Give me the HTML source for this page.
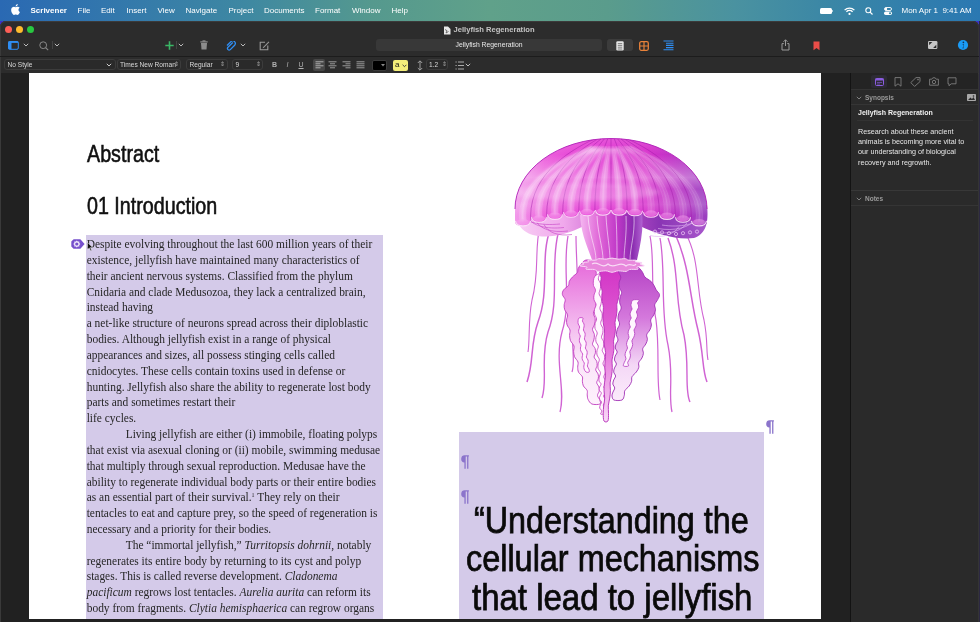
<!DOCTYPE html>
<html><head><meta charset="utf-8">
<style>
*{margin:0;padding:0;box-sizing:border-box}
html,body{width:980px;height:622px;overflow:hidden;background:linear-gradient(90deg,#3b33c9 0,#3b33c9 979px,#2c2842 979px);font-family:"Liberation Sans",sans-serif}
.abs{position:absolute}
#menubar{left:0;top:0;width:980px;height:21px;background:linear-gradient(90deg,#2a69b3 0%,#3378ac 12%,#3e88a2 25%,#55998e 38%,#60a18a 50%,#5a9c8c 62%,#4a92a0 75%,#3a86a6 85%,#2a78b2 100%)}
.mi{position:absolute;top:5px;font-size:8px;color:#fff;line-height:11px;white-space:nowrap}
#win{left:0;top:21px;width:979px;height:601px;background:#2c2c2c;border-radius:6px 6px 0 0;overflow:hidden;box-shadow:inset 1px 0 #3a3a3a,inset -1px 0 #343434,inset 0 1px #3c3a3a}
.tl{position:absolute;top:4.9px;width:7px;height:7px;border-radius:50%}
.ico{position:absolute}
.fb{position:absolute;top:38px;height:11px;border:1px solid #3c3c3c;border-radius:3px;background:#2a2a2a}
.fbt{position:absolute;top:.4px;font-size:6.6px;color:#d8d8d8;line-height:9px;white-space:nowrap}
#doc{left:0;top:73px;width:850px;height:549px;background:#212121;box-shadow:inset 1px 0 #3a3a3a}
#page{left:29px;top:73px;width:792px;height:546px;background:#fff;overflow:hidden}
.body{position:absolute;font-family:"Liberation Serif",serif;font-size:11.45px;line-height:15.83px;color:#262626;white-space:nowrap}
.h{position:absolute;font-size:24px;color:#111;-webkit-text-stroke:.6px #111;white-space:nowrap;transform-origin:0 0;transform:scaleX(.82);line-height:28px}
.q{position:absolute;font-size:36px;color:#0a0a0a;-webkit-text-stroke:.75px #0a0a0a;white-space:nowrap;transform-origin:0 0;line-height:38px}
.pil{position:absolute;font-size:14px;font-weight:bold;color:#8f7cc4;font-family:"Liberation Sans",sans-serif;line-height:14px}
#insp{left:851px;top:73px;width:127px;height:549px;background:#2a2a2a;overflow:hidden}
.it{position:absolute;font-size:7.2px;color:#e6e6e6;line-height:10.2px;white-space:nowrap}
</style></head><body style="will-change:transform">
<div id="menubar" class="abs">
  <svg class="abs" style="left:11px;top:4px" width="9" height="11" viewBox="0 0 17 20"><path fill="#fff" d="M14.1 10.6c0-2.6 2.1-3.8 2.2-3.9-1.2-1.8-3.1-2-3.7-2-1.6-.2-3.1.9-3.9.9-.8 0-2-.9-3.3-.9C3.7 4.8 2.1 5.8 1.2 7.3c-1.8 3.1-.5 7.8 1.3 10.300.9 1.300 1.900 2.700 3.200 2.600 1.300-.1 1.800-.8 3.300-.8s2 .8 3.300.8c1.400 0 2.300-1.300 3.100-2.600 1-1.400 1.400-2.800 1.400-2.900-.1 0-2.700-1-2.700-4.100zM11.600 3c.7-.9 1.200-2.100 1.100-3.300-1 0-2.300.7-3 1.600-.7.800-1.300 2-1.100 3.200 1.100.1 2.300-.6 3-1.500z"/></svg>
  <div class="mi" style="left:30.5px;font-weight:bold">Scrivener</div>
  <div class="mi" style="left:77.5px">File</div>
  <div class="mi" style="left:101px">Edit</div>
  <div class="mi" style="left:126.5px">Insert</div>
  <div class="mi" style="left:157.5px">View</div>
  <div class="mi" style="left:185.5px">Navigate</div>
  <div class="mi" style="left:228.5px">Project</div>
  <div class="mi" style="left:264px">Documents</div>
  <div class="mi" style="left:315px">Format</div>
  <div class="mi" style="left:352px">Window</div>
  <div class="mi" style="left:391.5px">Help</div>
  <!-- battery -->
  <div class="abs" style="left:819.5px;top:8px;width:12px;height:5.5px;border-radius:1.5px;background:#fff"></div>
  <div class="abs" style="left:832px;top:9.5px;width:1.2px;height:2.5px;background:rgba(255,255,255,.6)"></div>
  <svg class="abs" style="left:843.5px;top:6.5px" width="11" height="8" viewBox="0 0 11 8"><path d="M0.6 3.1A7 7 0 0 1 10.4 3.1" stroke="#fff" stroke-width="1.3" fill="none"/><path d="M2.4 4.8A4.4 4.4 0 0 1 8.6 4.8" stroke="#fff" stroke-width="1.3" fill="none"/><circle cx="5.5" cy="6.9" r="1.1" fill="#fff"/></svg>
  <svg class="abs" style="left:865px;top:6.5px" width="8" height="8" viewBox="0 0 8 8"><circle cx="3.3" cy="3.3" r="2.5" stroke="#fff" stroke-width="1.1" fill="none"/><path d="M5.1 5.1L7.5 7.5" stroke="#fff" stroke-width="1.2"/></svg>
  <svg class="abs" style="left:883.5px;top:6.5px" width="8" height="8" viewBox="0 0 8 8"><rect x="0.5" y="0.5" width="7" height="3" rx="1.5" fill="none" stroke="#fff" stroke-width=".9"/><circle cx="2" cy="2" r="1.2" fill="#fff"/><rect x="0" y="4.5" width="8" height="3.5" rx="1.7" fill="#fff"/><circle cx="6" cy="6.25" r="1.1" fill="#3a8aa6"/></svg>
  <div class="mi" style="left:901.5px">Mon Apr 1&nbsp; 9:41 AM</div>
</div>

<div id="win" class="abs">
  <div class="tl" style="left:4.6px;background:#fe5f57"></div>
  <div class="tl" style="left:15.9px;background:#febc2e"></div>
  <div class="tl" style="left:27.2px;background:#28c840"></div>
  <!-- title -->
  <svg class="ico" style="left:443px;top:4.5px" width="8" height="9" viewBox="0 0 8 9"><path d="M1 0.5h4l2.5 2.5v5.5h-6.5z" fill="#e8e8e8"/><path d="M2 3.5l2 1.2-1 2.3 2.5-1.5" stroke="#555" stroke-width=".8" fill="none"/></svg>
  <div class="abs" style="left:453.5px;top:3.8px;font-size:7.6px;font-weight:bold;color:#c4c4c4;line-height:10px;white-space:nowrap">Jellyfish Regeneration</div>
  <!-- toolbar left -->
  <svg class="ico" style="left:8px;top:19.8px" width="11" height="9" viewBox="0 0 11 9"><rect x="0.5" y="0.5" width="9.8" height="7.8" rx="1.3" fill="none" stroke="#2f8ef4" stroke-width="1"/><rect x="0.5" y="0.5" width="3" height="7.8" fill="#2f8ef4"/><rect x="0.5" y="0.5" width="9.8" height="1.4" fill="#2f8ef4"/></svg>
  <svg class="ico" style="left:22.5px;top:22px" width="6" height="4" viewBox="0 0 6 4"><path d="M0.8 0.8L3 3 5.2 0.8" stroke="#bbb" stroke-width="1" fill="none"/></svg>
  <svg class="ico" style="left:39px;top:19.5px" width="10" height="10" viewBox="0 0 10 10"><circle cx="4.2" cy="4.2" r="3.4" stroke="#8a8a8a" stroke-width="1" fill="none"/><path d="M6.6 6.6L9.2 9.2" stroke="#8a8a8a" stroke-width="1.1"/></svg>
  <div class="abs" style="left:51.5px;top:20px;width:1px;height:8px;background:#444"></div>
  <svg class="ico" style="left:53.5px;top:22px" width="6" height="4" viewBox="0 0 6 4"><path d="M0.8 0.8L3 3 5.2 0.8" stroke="#bbb" stroke-width="1" fill="none"/></svg>
  <svg class="ico" style="left:164.5px;top:20px" width="9" height="9" viewBox="0 0 9 9"><path d="M4.5 0.3v8.4M0.3 4.5h8.4" stroke="#3ab766" stroke-width="1.6"/></svg>
  <div class="abs" style="left:175.5px;top:20px;width:1px;height:8px;background:#444"></div>
  <svg class="ico" style="left:178px;top:22px" width="6" height="4" viewBox="0 0 6 4"><path d="M0.8 0.8L3 3 5.2 0.8" stroke="#bbb" stroke-width="1" fill="none"/></svg>
  <svg class="ico" style="left:199.5px;top:19px" width="8" height="10" viewBox="0 0 8 10"><rect x="2.5" y="0.3" width="3" height="1.4" fill="#8c8c8c"/><rect x="0.3" y="1.3" width="7.4" height="1.2" fill="#8c8c8c"/><path d="M1 3h6l-.5 6.6h-5z" fill="#8c8c8c"/></svg>
  <svg class="ico" style="left:226px;top:19.5px" width="10" height="10" viewBox="0 0 10 10"><path d="M6.8 1.5L2 6.3a1.6 1.6 0 0 0 2.3 2.3L8.6 4.3a2.6 2.6 0 0 0-3.7-3.7L1 4.5" stroke="#2f8ef4" stroke-width="1.3" fill="none" transform="rotate(0 5 5)"/></svg>
  <svg class="ico" style="left:240px;top:22px" width="6" height="4" viewBox="0 0 6 4"><path d="M0.8 0.8L3 3 5.2 0.8" stroke="#bbb" stroke-width="1" fill="none"/></svg>
  <svg class="ico" style="left:259px;top:19.5px" width="11" height="10" viewBox="0 0 11 10"><path d="M6 1.2H1.2v7.6h7.6V4.5" stroke="#9a9a9a" stroke-width="1.1" fill="none"/><path d="M9.6 0.6L4.2 6l-.6 1.3 1.3-.6 5.4-5.4z" fill="#9a9a9a"/></svg>
  <!-- path box -->
  <div class="abs" style="left:376px;top:18px;width:226px;height:12px;border-radius:3px;background:#383838"></div>
  <div class="abs" style="left:376px;top:19px;width:226px;text-align:center;font-size:6.8px;color:#e8e8e8;line-height:10px;white-space:nowrap">Jellyfish Regeneration</div>
  <div class="abs" style="left:606.5px;top:18px;width:26px;height:12px;border-radius:3px;background:#3c3c3c"></div>
  <svg class="ico" style="left:616px;top:19.5px" width="8" height="10" viewBox="0 0 8 10"><rect x="0.3" y="0.3" width="7.4" height="9.2" rx="1.2" fill="#e6e6e6"/><path d="M1.8 2.6h4.4M1.8 4.4h4.4M1.8 6.2h4.4M1.8 8h4.4" stroke="#555" stroke-width=".7"/></svg>
  <svg class="ico" style="left:638.5px;top:19.5px" width="10" height="10" viewBox="0 0 10 10"><rect x="0.7" y="0.7" width="8.6" height="8.6" rx="1.5" fill="none" stroke="#e8823a" stroke-width="1.3"/><path d="M5 0.7v8.6M0.7 5h8.6" stroke="#e8823a" stroke-width="1.2"/></svg>
  <svg class="ico" style="left:663px;top:19px" width="11" height="11" viewBox="0 0 11 11"><path d="M0.5 1h10M3 3.2h7.5M3 5.4h7.5M3 7.6h7.5M0.5 9.8h10" stroke="#2f8ef4" stroke-width="1.1"/></svg>
  <!-- toolbar right -->
  <svg class="ico" style="left:781px;top:18px" width="9" height="12" viewBox="0 0 9 12"><path d="M4.5 0.8v6.2M2.5 2.8l2-2 2 2" stroke="#9a9a9a" stroke-width="1" fill="none"/><path d="M2.8 4.6H1v6.4h7V4.6H6.2" stroke="#9a9a9a" stroke-width="1" fill="none"/></svg>
  <svg class="ico" style="left:812.5px;top:19.5px" width="7" height="10" viewBox="0 0 7 10"><path d="M0.5 0.5h6v8.8L3.5 7 0.5 9.3z" fill="#ea4d48"/></svg>
  <svg class="ico" style="left:928px;top:19.8px" width="10" height="8" viewBox="0 0 10 8"><rect x="0" y="0" width="9.4" height="8" rx="1.2" fill="#c6c6c6"/><path d="M1.1 1.1h3.2L1.1 4.3z" fill="#2a2a2a"/><path d="M8.3 6.9H5.1L8.3 3.7z" fill="#2a2a2a"/></svg>
  <svg class="ico" style="left:957px;top:18.1px" width="12" height="12" viewBox="0 0 12 12"><circle cx="6" cy="6" r="5.1" fill="#1a9bf5"/><circle cx="6.4" cy="3.3" r=".85" fill="#13314f"/><path d="M5.6 5.1h1.3L6.3 8.8h.6l-.1.5H5.2l.1-.5h.6l.5-3.2h-.9z" fill="#13314f"/></svg>
  <div class="abs" style="left:0;top:35px;width:979px;height:1px;background:#1c1c1c"></div>
  <!-- format bar -->
  <div class="fb" style="left:4px;width:112px"><div class="fbt" style="left:2.5px">No Style</div><svg class="abs" style="left:101px;top:2.5px" width="6" height="4" viewBox="0 0 6 4"><path d="M0.8 0.8L3 3 5.2 0.8" stroke="#ccc" stroke-width="1" fill="none"/></svg></div>
  <div class="fb" style="left:116.5px;width:64.5px"><div class="fbt" style="left:2.5px">Times New Roman</div><div class="fbt" style="left:56px;font-size:6px;color:#aaa">&#8661;</div></div>
  <div class="fb" style="left:186px;width:42px"><div class="fbt" style="left:2.5px">Regular</div><div class="fbt" style="left:33px;font-size:6px;color:#aaa">&#8661;</div></div>
  <div class="fb" style="left:232px;width:31px"><div class="fbt" style="left:2.5px">9</div><div class="fbt" style="left:23px;font-size:6px;color:#aaa">&#8661;</div></div>
  <div class="abs" style="left:272px;top:39px;font-size:7px;font-weight:bold;color:#b0b0b0;line-height:10px">B</div>
  <div class="abs" style="left:286.5px;top:39px;font-size:7px;font-style:italic;color:#b0b0b0;line-height:10px">I</div>
  <div class="abs" style="left:298.5px;top:39px;font-size:7px;text-decoration:underline;color:#b0b0b0;line-height:10px">U</div>
  <div class="abs" style="left:312.5px;top:38px;width:12.5px;height:12px;border-radius:2px;background:#474747"></div>
  <svg class="ico" style="left:314.5px;top:40px" width="9" height="8" viewBox="0 0 9 8"><path d="M0.5 0.8h8M0.5 2.8h5M0.5 4.8h8M0.5 6.8h5" stroke="#b0b0b0" stroke-width="1"/></svg>
  <svg class="ico" style="left:328px;top:40px" width="9" height="8" viewBox="0 0 9 8"><path d="M0.5 0.8h8M2 2.8h5M0.5 4.8h8M2 6.8h5" stroke="#9a9a9a" stroke-width="1"/></svg>
  <svg class="ico" style="left:342px;top:40px" width="9" height="8" viewBox="0 0 9 8"><path d="M0.5 0.8h8M3.5 2.8h5M0.5 4.8h8M3.5 6.8h5" stroke="#9a9a9a" stroke-width="1"/></svg>
  <svg class="ico" style="left:355.5px;top:40px" width="9" height="8" viewBox="0 0 9 8"><path d="M0.5 0.8h8M0.5 2.8h8M0.5 4.8h8M0.5 6.8h8" stroke="#9a9a9a" stroke-width="1"/></svg>
  <div class="abs" style="left:371.5px;top:38.5px;width:15.5px;height:11px;border-radius:2px;background:#000;border:1px solid #3c3c3c"></div>
  <svg class="ico" style="left:381px;top:43px" width="4" height="3" viewBox="0 0 4 3"><path d="M0 0h4L2 2.5z" fill="#888"/></svg>
  <div class="abs" style="left:392.5px;top:38.5px;width:15px;height:11px;border-radius:2px;background:#f4ee7a"></div>
  <div class="abs" style="left:395px;top:38.5px;font-size:8px;color:#111;line-height:10px">a</div>
  <svg class="ico" style="left:401.5px;top:42.5px" width="5" height="4" viewBox="0 0 5 4"><path d="M0.6 0.8L2.5 2.7 4.4 0.8" stroke="#333" stroke-width=".9" fill="none"/></svg>
  <svg class="ico" style="left:417px;top:38.5px" width="6" height="11" viewBox="0 0 6 11"><path d="M0.8 3L3 0.8 5.2 3M0.8 8L3 10.2 5.2 8M3 1v9" stroke="#aaa" stroke-width=".9" fill="none"/></svg>
  <div class="fb" style="left:425.5px;width:22px"><div class="fbt" style="left:2.5px">1.2</div><div class="fbt" style="left:15px;font-size:6px;color:#aaa">&#8661;</div></div>
  <svg class="ico" style="left:454.5px;top:39.5px" width="9" height="9" viewBox="0 0 9 9"><path d="M0.5 1h1.2M0.5 4.5h1.2M0.5 8h1.2M3 1h6M3 4.5h6M3 8h6" stroke="#aaa" stroke-width="1"/></svg>
  <svg class="ico" style="left:465px;top:42px" width="6" height="4" viewBox="0 0 6 4"><path d="M0.8 0.8L3 3 5.2 0.8" stroke="#bbb" stroke-width="1" fill="none"/></svg>
  <div class="abs" style="left:0;top:51.5px;width:979px;height:1px;background:#383838"></div>
</div>

<div id="doc" class="abs"></div>
<div id="page" class="abs">
  <div class="h" style="left:57.9px;top:66.6px">Abstract</div>
  <div class="h" style="left:58px;top:119.2px">01 Introduction</div>
  <div class="abs" style="left:57px;top:161.8px;width:297px;height:390px;background:#d4cae9"></div>
  <div class="body" style="left:57.7px;top:164.1px">Despite evolving throughout the last 600 million years of their<br>existence, jellyfish have maintained many characteristics of<br>their ancient nervous systems. Classified from the phylum<br>Cnidaria and clade Medusozoa, they lack a centralized brain,<br>instead having<br>a net-like structure of neurons spread across their diploblastic<br>bodies. Although jellyfish exist in a range of physical<br>appearances and sizes, all possess stinging cells called<br>cnidocytes. These cells contain toxins used in defense or<br>hunting. Jellyfish also share the ability to regenerate lost body<br>parts and sometimes restart their<br>life cycles.<br><span style="padding-left:39px"></span>Living jellyfish are either (i) immobile, floating polyps<br>that exist via asexual cloning or (ii) mobile, swimming medusae<br>that multiply through sexual reproduction. Medusae have the<br>ability to regenerate individual body parts or their entire bodies<br>as an essential part of their survival.<sup style="font-size:6px;vertical-align:4px;line-height:0">1</sup> They rely on their<br>tentacles to eat and capture prey, so the speed of regeneration is<br>necessary and a priority for their bodies.<br><span style="padding-left:39px"></span>The “immortal jellyfish,” <i>Turritopsis dohrnii</i>, notably<br>regenerates its entire body by returning to its cyst and polyp<br>stages. This is called reverse development. <i>Cladonema</i><br><i>pacificum</i> regrows lost tentacles. <i>Aurelia aurita</i> can reform its<br>body from fragments. <i>Clytia hemisphaerica</i> can regrow organs</div>
  <svg class="abs" style="left:42px;top:166.2px" width="14" height="10" viewBox="0 0 14 10"><path d="M2.6 0.3h6.8l4.2 4.7-4.2 4.7H2.6L.3 7.4V2.6z" fill="#7650cc"/><path d="M9.40 5.00 L8.29 6.03 L8.35 7.55 L6.83 7.49 L5.80 8.60 L4.77 7.49 L3.25 7.55 L3.31 6.03 L2.20 5.00 L3.31 3.97 L3.25 2.45 L4.77 2.51 L5.80 1.40 L6.83 2.51 L8.35 2.45 L8.29 3.97Z" fill="#efe6fb"/><circle cx="5.8" cy="5" r="1.6" fill="#7650cc"/></svg>
  <svg class="abs" style="left:58px;top:169px" width="6" height="9" viewBox="0 0 6 9"><path d="M0.5 0.5v7l1.8-1.6 1.3 2.8 1-.5-1.3-2.7h2.3z" fill="#111" stroke="#fff" stroke-width=".4"/></svg>
  <div class="abs" style="left:429.5px;top:358.5px;width:305.5px;height:200px;background:#d4cae9"></div>
  <svg class="abs" style="left:737.2px;top:347.1px" width="8" height="14" viewBox="0 0 8 14"><path d="M4.2 0.3H7.9V1.5H7.4V13.7H6.1V1.5H4.7V13.7H3.4V7.4A3.55 3.55 0 0 1 4.2 0.3Z" fill="#8b74cb"/></svg>
  <svg class="abs" style="left:432.3px;top:382.3px" width="8" height="14" viewBox="0 0 8 14"><path d="M4.2 0.3H7.9V1.5H7.4V13.7H6.1V1.5H4.7V13.7H3.4V7.4A3.55 3.55 0 0 1 4.2 0.3Z" fill="#8b74cb"/></svg>
  <svg class="abs" style="left:432.3px;top:417px" width="8" height="14" viewBox="0 0 8 14"><path d="M4.2 0.3H7.9V1.5H7.4V13.7H6.1V1.5H4.7V13.7H3.4V7.4A3.55 3.55 0 0 1 4.2 0.3Z" fill="#8b74cb"/></svg>
  <div class="q" style="left:445.3px;top:429px;transform:scaleX(.897)">“Understanding the</div>
  <div class="q" style="left:436.6px;top:467px;transform:scaleX(.9)">cellular mechanisms</div>
  <div class="q" style="left:442.5px;top:505.5px;transform:scaleX(.916)">that lead to jellyfish</div>
<!--J--><svg class="abs" style="left:430px;top:47px" width="305" height="385" viewBox="459 120 305 385">
<defs>
<linearGradient id="jb" x1="516" y1="0" x2="707" y2="0" gradientUnits="userSpaceOnUse">
<stop offset="0" stop-color="#f298ea"/><stop offset=".15" stop-color="#ec60dc"/><stop offset=".4" stop-color="#e438d4"/><stop offset=".68" stop-color="#d830cc"/><stop offset=".88" stop-color="#b436c4"/><stop offset="1" stop-color="#9a40c0"/></linearGradient>
<linearGradient id="js" x1="0" y1="139" x2="0" y2="216" gradientUnits="userSpaceOnUse">
<stop offset="0" stop-color="#fff" stop-opacity=".15"/><stop offset=".2" stop-color="#fff" stop-opacity="0"/><stop offset=".5" stop-color="#fff" stop-opacity=".32"/><stop offset=".65" stop-color="#fff" stop-opacity=".08"/><stop offset=".85" stop-color="#fff" stop-opacity=".18"/><stop offset="1" stop-color="#fff" stop-opacity="0"/></linearGradient>
<linearGradient id="jm" x1="580" y1="0" x2="642" y2="0" gradientUnits="userSpaceOnUse">
<stop offset="0" stop-color="#f4b8f0"/><stop offset=".3" stop-color="#e068d8"/><stop offset=".6" stop-color="#c038c8"/><stop offset=".85" stop-color="#8a2cb0"/><stop offset="1" stop-color="#b060d0"/></linearGradient>
<linearGradient id="jsk" x1="516" y1="0" x2="707" y2="0" gradientUnits="userSpaceOnUse">
<stop offset="0" stop-color="#f8d0f4"/><stop offset=".25" stop-color="#f0a8ec"/><stop offset=".55" stop-color="#c050c8"/><stop offset=".75" stop-color="#8a34b4"/><stop offset="1" stop-color="#a858cc"/></linearGradient>
<clipPath id="dc"><path id="dome" d="M707 209 L707 222.0 C707.0 224.9 703.8 225.9 699.0 225.9 C694.2 225.9 691.0 224.9 691.0 218.0 C691.0 221.3 687.8 222.3 683.0 222.3 C678.2 222.3 675.0 221.3 675.0 214.8 C675.0 218.4 671.8 219.4 667.0 219.4 C662.2 219.4 659.0 218.4 659.0 212.2 C659.0 216.3 655.8 217.3 651.0 217.3 C646.2 217.3 643.0 216.3 643.0 210.4 C643.0 214.8 639.8 215.8 635.0 215.8 C630.2 215.8 627.0 214.8 627.0 209.4 C627.0 214.1 623.8 215.1 619.0 215.1 C614.2 215.1 611.0 214.1 611.0 209.0 C611.0 214.1 607.8 215.1 603.0 215.1 C598.2 215.1 595.0 214.1 595.0 209.4 C595.0 214.8 591.8 215.8 587.0 215.8 C582.2 215.8 579.0 214.8 579.0 210.4 C579.0 216.3 575.8 217.3 571.0 217.3 C566.2 217.3 563.0 216.3 563.0 212.2 C563.0 218.4 559.8 219.4 555.0 219.4 C550.2 219.4 547.0 218.4 547.0 214.8 C547.0 221.3 543.8 222.3 539.0 222.3 C534.2 222.3 531.0 221.3 531.0 218.0 C531.0 224.9 527.8 225.9 523.0 225.9 C518.2 225.9 515.0 224.9 515.0 222.0 L515 209 A96 70.5 0 0 1 707 209 Z"/></clipPath>
<filter id="bl1" x="-50%" y="-20%" width="200%" height="140%"><feGaussianBlur stdDeviation="1.2"/></filter><filter id="bl" x="-20%" y="-50%" width="140%" height="200%"><feGaussianBlur stdDeviation="2"/></filter></defs>
<path d="M550 230 C540 258 550 290 538 322 C530 345 534 362 527 382" fill="none" stroke="#c43cc8" stroke-width="1.5" stroke-opacity=".8"/>
<path d="M558 234 C550 268 560 300 548 332 C540 358 548 380 542 398" fill="none" stroke="#c43cc8" stroke-width="1.4" stroke-opacity=".8"/>
<path d="M568 236 C562 270 572 300 562 332 C554 362 566 390 560 412" fill="none" stroke="#c43cc8" stroke-width="1.3" stroke-opacity=".8"/>
<path d="M576 236 C576 262 580 290 574 322 C570 345 576 360 572 372" fill="none" stroke="#c43cc8" stroke-width="1.2" stroke-opacity=".8"/>
<path d="M540 226 C534 250 540 270 532 300 C528 320 530 340 528 352" fill="none" stroke="#c43cc8" stroke-width="1.1" stroke-opacity=".8"/>
<path d="M676 236 C690 268 690 300 698 330 C704 355 702 370 707 382" fill="none" stroke="#c43cc8" stroke-width="1.5" stroke-opacity=".8"/>
<path d="M668 238 C680 270 674 300 684 335 C690 365 684 390 690 402" fill="none" stroke="#c43cc8" stroke-width="1.4" stroke-opacity=".8"/>
<path d="M660 238 C666 270 660 310 668 345 C674 375 668 395 672 412" fill="none" stroke="#c43cc8" stroke-width="1.3" stroke-opacity=".8"/>
<path d="M650 236 C655 260 650 290 656 320 C660 350 656 380 660 400" fill="none" stroke="#c43cc8" stroke-width="1.2" stroke-opacity=".8"/>
<path d="M686 234 C700 260 696 290 704 320 C708 340 706 350 708 360" fill="none" stroke="#c43cc8" stroke-width="1.1" stroke-opacity=".8"/>
<path d="M515.6 204 C514 226 524 234 538 236 C552 238 568 234 584 226 L640 226 C656 234 676 240 694 238 C706 234 709 222 707 205 Z" fill="url(#jsk)"/>
<path d="M520 214.0 C524 222.0 540 226.0 560 224.0" fill="none" stroke="#c848c8" stroke-width=".8" stroke-opacity=".8"/>
<path d="M703 216.0 C698 224.0 680 228.0 662 225.0" fill="none" stroke="#e0b0f0" stroke-width=".8" stroke-opacity=".8"/>
<path d="M528 217.5 C532 225.5 546 229.5 564 227.5" fill="none" stroke="#c848c8" stroke-width=".8" stroke-opacity=".8"/>
<path d="M695 219.5 C690 227.5 674 231.5 658 228.5" fill="none" stroke="#e0b0f0" stroke-width=".8" stroke-opacity=".8"/>
<path d="M536 221.0 C540 229.0 552 233.0 568 231.0" fill="none" stroke="#c848c8" stroke-width=".8" stroke-opacity=".8"/>
<path d="M687 223.0 C682 231.0 668 235.0 654 232.0" fill="none" stroke="#e0b0f0" stroke-width=".8" stroke-opacity=".8"/>
<path d="M544 224.5 C548 232.5 558 236.5 572 234.5" fill="none" stroke="#c848c8" stroke-width=".8" stroke-opacity=".8"/>
<path d="M679 226.5 C674 234.5 662 238.5 650 235.5" fill="none" stroke="#e0b0f0" stroke-width=".8" stroke-opacity=".8"/>
<circle cx="655" cy="231.6" r="1.6" fill="none" stroke="#f0d0f8" stroke-width=".7"/>
<circle cx="662" cy="232.4" r="1.6" fill="none" stroke="#f0d0f8" stroke-width=".7"/>
<circle cx="669" cy="233.2" r="1.6" fill="none" stroke="#f0d0f8" stroke-width=".7"/>
<circle cx="676" cy="234.0" r="1.6" fill="none" stroke="#f0d0f8" stroke-width=".7"/>
<circle cx="683" cy="233.2" r="1.6" fill="none" stroke="#f0d0f8" stroke-width=".7"/>
<circle cx="690" cy="232.4" r="1.6" fill="none" stroke="#f0d0f8" stroke-width=".7"/>
<circle cx="697" cy="231.6" r="1.6" fill="none" stroke="#f0d0f8" stroke-width=".7"/>
<path d="M580 212 C580 232 588 248 592 260 L637 260 C640 246 644 230 642 212 Z" fill="url(#jm)"/>
<path d="M588 216 C589 235 596 248 596 260" stroke="#fff" stroke-opacity=".55" stroke-width="1" fill="none"/>
<path d="M597 216 C598 235 603 248 603 260" stroke="#fff" stroke-opacity=".55" stroke-width="1" fill="none"/>
<path d="M606 216 C607 235 610 248 610 260" stroke="#fff" stroke-opacity=".55" stroke-width="1" fill="none"/>
<path d="M616 216 C617 235 617 248 617 260" stroke="#fff" stroke-opacity=".55" stroke-width="1" fill="none"/>
<path d="M626 216 C627 235 624 248 624 260" stroke="#fff" stroke-opacity=".55" stroke-width="1" fill="none"/>
<path d="M634 216 C635 235 630 248 630 260" stroke="#fff" stroke-opacity=".55" stroke-width="1" fill="none"/>
<linearGradient id="ga" x1="0" y1="262" x2="0" y2="421" gradientUnits="userSpaceOnUse"><stop offset="0" stop-color="#e66ada"/><stop offset=".3" stop-color="#f0a6ea"/><stop offset=".6" stop-color="#fae4f8"/><stop offset="1" stop-color="#fff6fe"/></linearGradient>
<linearGradient id="gc" x1="0" y1="262" x2="0" y2="421" gradientUnits="userSpaceOnUse"><stop offset="0" stop-color="#d030c4"/><stop offset=".5" stop-color="#e468d8"/><stop offset="1" stop-color="#f8d8f6"/></linearGradient>
<linearGradient id="gd" x1="0" y1="262" x2="0" y2="421" gradientUnits="userSpaceOnUse"><stop offset="0" stop-color="#b440c4"/><stop offset=".35" stop-color="#d478dc"/><stop offset=".65" stop-color="#f4d8f6"/><stop offset="1" stop-color="#fff6fe"/></linearGradient>
<path d="M586.0 260.0 C583.6 260.4 582.4 262.8 581.1 264.3 C579.8 265.7 578.8 267.1 578.2 268.5 C577.5 270.0 578.2 271.4 577.2 272.8 C576.2 274.2 573.7 275.6 572.4 277.1 C571.1 278.5 570.0 279.9 569.3 281.3 C568.7 282.8 569.3 284.2 568.4 285.6 C567.4 287.0 564.6 288.4 563.6 289.9 C562.6 291.4 562.1 292.9 562.4 294.5 C562.6 296.2 564.9 297.9 565.2 299.6 C565.5 301.3 564.3 303.0 564.2 304.7 C564.1 306.4 564.1 308.0 564.7 309.7 C565.3 311.4 567.3 313.1 567.6 314.8 C567.9 316.5 566.7 318.2 566.6 319.9 C566.5 321.6 566.5 323.2 567.1 324.9 C567.6 326.6 569.6 328.3 570.0 330.0 C570.4 331.7 569.5 333.6 569.6 335.3 C569.7 337.1 569.8 338.9 570.5 340.7 C571.2 342.4 573.5 344.2 574.0 346.0 C574.5 347.8 573.6 349.6 573.6 351.3 C573.7 353.1 573.8 354.9 574.5 356.7 C575.2 358.4 577.4 360.2 578.0 362.0 C578.5 363.8 577.6 365.6 577.7 367.3 C577.8 369.0 577.8 370.7 578.6 372.3 C579.4 373.8 581.7 375.3 582.4 376.8 C583.0 378.3 582.2 379.8 582.4 381.3 C582.6 382.8 582.6 384.4 583.4 385.9 C584.1 387.4 586.5 388.9 587.1 390.4 C587.8 391.9 587.1 393.4 587.2 394.9 C587.4 396.4 587.3 398.0 588.1 399.5 C588.9 401.0 589.9 403.2 591.9 404.0 C593.9 404.8 598.7 404.7 600.0 404.0 C601.3 403.3 600.1 401.2 599.6 399.7 C599.2 398.3 597.5 396.9 597.5 395.5 C597.4 394.0 598.9 392.6 599.2 391.2 C599.4 389.8 599.3 388.4 598.9 386.9 C598.5 385.5 596.8 384.1 596.7 382.7 C596.6 381.2 598.1 379.8 598.3 378.4 C598.6 377.0 598.6 375.6 598.1 374.1 C597.7 372.7 595.9 371.3 595.7 369.9 C595.6 368.4 596.9 367.0 597.1 365.6 C597.2 364.2 597.2 362.8 596.7 361.3 C596.2 359.9 594.3 358.5 594.1 357.1 C593.9 355.6 595.3 354.2 595.4 352.8 C595.6 351.4 595.6 350.0 595.1 348.5 C594.6 347.1 592.8 345.7 592.5 344.3 C592.3 342.8 593.5 341.6 593.8 340.0 C594.1 338.4 594.6 336.4 594.4 334.7 C594.2 332.9 592.5 331.1 592.5 329.3 C592.6 327.6 594.1 325.8 594.6 324.0 C595.0 322.2 595.4 320.4 595.2 318.7 C595.0 316.9 593.3 315.1 593.4 313.3 C593.4 311.6 594.9 309.8 595.3 308.0 C595.8 306.2 596.2 304.4 596.0 302.7 C595.8 300.9 594.1 299.2 594.0 297.5 C594.0 295.8 595.3 294.1 595.7 292.4 C596.0 290.7 596.5 289.0 596.2 287.3 C595.9 285.6 594.1 284.0 594.0 282.3 C593.9 280.6 595.3 278.9 595.6 277.2 C596.0 275.5 596.5 273.8 596.2 272.1 C596.0 270.4 594.2 268.8 594.1 267.1 C593.9 265.4 596.9 263.2 595.6 262.0 C594.3 260.8 588.4 259.6 586.0 260.0Z" fill="url(#ga)" fill-opacity="1" stroke="#c03cc0" stroke-width="0.9" stroke-linejoin="round"/>
<path d="M595.0 276.0 C594.0 277.1 593.6 279.2 593.4 280.8 C593.1 282.4 593.2 283.9 593.5 285.5 C593.9 287.1 595.5 288.7 595.5 290.3 C595.6 291.9 594.2 293.5 594.0 295.1 C593.7 296.6 593.7 298.2 594.0 299.8 C594.4 301.4 596.0 303.0 596.1 304.6 C596.1 306.2 594.8 307.8 594.5 309.4 C594.3 310.9 594.2 312.5 594.5 314.1 C594.9 315.7 596.5 317.3 596.6 318.9 C596.7 320.5 595.3 322.1 595.1 323.6 C594.8 325.2 594.7 326.9 595.0 328.4 C595.4 330.0 597.1 331.5 597.2 332.9 C597.4 334.4 596.2 335.9 595.9 337.4 C595.7 338.8 595.6 340.3 596.0 341.8 C596.4 343.2 598.1 344.7 598.3 346.2 C598.5 347.6 597.3 349.1 597.0 350.6 C596.8 352.1 596.6 353.5 597.0 355.0 C597.4 356.5 599.1 357.9 599.3 359.4 C599.5 360.9 598.4 362.4 598.1 363.8 C597.9 365.3 597.7 366.8 598.0 368.2 C598.4 369.7 600.2 371.2 600.4 372.6 C600.6 374.1 599.5 375.7 599.2 377.1 C599.0 378.5 598.7 379.8 599.0 381.0 C599.3 382.2 601.0 383.0 601.1 384.0 C601.2 385.0 600.0 386.0 599.7 387.0 C599.4 388.0 599.0 389.0 599.2 390.0 C599.5 391.0 601.2 392.0 601.3 393.0 C601.5 394.0 600.3 395.0 600.0 396.0 C599.7 397.0 599.2 398.0 599.5 399.0 C599.7 400.0 601.4 401.0 601.6 402.0 C601.7 403.0 600.6 404.0 600.3 405.0 C600.0 406.0 599.4 407.0 599.7 408.0 C599.9 409.0 601.7 410.0 601.8 411.0 C602.0 412.0 600.4 413.5 600.6 414.0 C600.8 414.5 602.3 414.5 603.0 414.0 C603.7 413.5 604.6 412.0 605.0 411.0 C605.3 410.0 605.2 409.0 604.9 408.0 C604.6 407.0 603.2 406.0 603.3 405.0 C603.3 404.0 604.9 403.0 605.2 402.0 C605.5 401.0 605.5 400.0 605.2 399.0 C604.9 398.0 603.5 397.0 603.5 396.0 C603.6 395.0 605.1 394.0 605.4 393.0 C605.8 392.0 605.8 391.0 605.5 390.0 C605.2 389.0 603.8 388.0 603.8 387.0 C603.8 386.0 605.3 385.0 605.7 384.0 C606.0 383.0 606.1 382.2 605.8 381.0 C605.5 379.8 603.9 378.5 603.8 377.1 C603.7 375.7 605.1 374.1 605.3 372.6 C605.5 371.2 605.5 369.7 605.2 368.2 C604.8 366.8 603.1 365.3 603.0 363.8 C602.9 362.4 604.2 360.9 604.5 359.4 C604.7 357.9 604.8 356.5 604.4 355.0 C604.0 353.5 602.4 352.1 602.2 350.6 C602.1 349.1 603.4 347.6 603.6 346.2 C603.9 344.7 604.0 343.2 603.6 341.8 C603.3 340.3 601.6 338.8 601.5 337.4 C601.3 335.9 602.6 334.4 602.8 332.9 C603.0 331.4 603.2 329.9 602.9 328.4 C602.5 326.8 600.8 325.1 600.7 323.4 C600.5 321.8 601.7 320.1 602.0 318.5 C602.2 316.8 602.5 315.2 602.1 313.5 C601.8 311.9 600.0 310.2 599.9 308.6 C599.7 306.9 600.9 305.3 601.1 303.6 C601.4 302.0 601.7 300.4 601.4 298.7 C601.0 297.1 599.3 295.4 599.1 293.8 C598.9 292.1 600.1 290.5 600.3 288.8 C600.6 287.2 600.9 285.5 600.6 283.9 C600.3 282.2 598.5 280.6 598.3 278.9 C598.1 277.3 600.0 274.5 599.5 274.0 C598.9 273.5 596.0 274.9 595.0 276.0Z" fill="#fff6fe" fill-opacity="1" stroke="#c848c4" stroke-width="0.9" stroke-linejoin="round"/>
<path d="M600.0 264.0 C596.1 264.4 599.5 267.0 599.5 268.5 C599.5 270.0 599.6 271.5 599.8 273.0 C600.1 274.5 601.0 276.0 601.1 277.5 C601.3 279.0 600.7 280.5 600.6 282.0 C600.6 283.5 600.7 285.0 600.9 286.5 C601.2 288.0 602.1 289.5 602.2 291.0 C602.4 292.5 601.8 294.0 601.8 295.5 C601.7 297.0 601.8 298.0 602.1 300.0 C602.3 302.0 603.2 305.0 603.4 307.5 C603.5 310.0 602.9 312.5 602.9 315.0 C602.9 317.5 602.9 320.0 603.2 322.5 C603.4 325.0 604.3 327.5 604.5 330.0 C604.6 332.5 604.1 335.0 604.1 337.5 C604.0 340.0 604.0 342.5 604.3 345.0 C604.5 347.5 605.5 350.0 605.6 352.5 C605.8 355.0 605.3 357.5 605.2 360.0 C605.1 362.5 604.7 365.1 604.8 367.6 C604.8 370.2 605.5 372.7 605.5 375.2 C605.4 377.8 604.7 380.3 604.5 382.9 C604.2 385.4 603.9 388.0 604.0 390.5 C604.0 393.0 604.8 395.6 604.7 398.1 C604.7 400.7 604.0 403.2 603.7 405.8 C603.5 408.3 603.2 410.8 603.2 413.4 C603.3 415.9 603.2 419.7 604.0 421.0 C604.8 422.3 607.1 422.3 607.9 421.0 C608.6 419.7 608.5 415.9 608.5 413.4 C608.6 410.8 608.1 408.3 608.3 405.8 C608.5 403.2 609.4 400.7 609.7 398.1 C610.1 395.6 610.4 393.0 610.4 390.5 C610.5 388.0 609.9 385.4 610.1 382.9 C610.3 380.3 611.2 377.8 611.6 375.2 C612.0 372.7 612.3 370.2 612.3 367.6 C612.4 365.1 611.8 362.3 612.0 360.0 C612.2 357.7 613.0 355.8 613.3 353.8 C613.7 351.7 613.9 349.6 614.0 347.5 C614.0 345.4 613.4 343.3 613.5 341.2 C613.6 339.2 614.5 337.1 614.8 335.0 C615.1 332.9 615.5 330.8 615.5 328.8 C615.5 326.7 614.9 324.6 615.0 322.5 C615.1 320.4 616.0 318.3 616.3 316.2 C616.6 314.2 616.9 312.0 617.0 310.0 C617.1 308.0 616.6 306.3 616.8 304.5 C617.0 302.7 617.9 300.8 618.3 299.0 C618.7 297.2 619.1 295.3 619.3 293.5 C619.4 291.7 618.8 289.8 619.0 288.0 C619.2 286.2 620.1 284.3 620.5 282.5 C620.9 280.7 621.4 278.8 621.5 277.0 C621.7 275.2 621.1 273.3 621.3 271.5 C621.5 269.7 626.3 267.2 622.7 266.0 C619.2 264.8 603.9 263.6 600.0 264.0Z" fill="url(#gc)" fill-opacity="1" stroke="#b42cb8" stroke-width="0.9" stroke-linejoin="round"/>
<path d="M620.0 262.0 C617.8 263.2 618.6 265.4 618.3 267.1 C618.1 268.8 618.1 270.4 618.6 272.1 C619.0 273.8 620.7 275.5 620.8 277.2 C620.9 278.9 619.4 280.6 619.2 282.3 C618.9 284.0 618.9 285.6 619.3 287.3 C619.7 289.0 621.5 290.7 621.6 292.4 C621.7 294.1 620.3 295.8 620.0 297.5 C619.7 299.2 619.5 300.9 619.7 302.7 C619.9 304.4 621.3 306.2 621.2 308.0 C621.1 309.8 619.4 311.6 618.8 313.3 C618.3 315.1 617.9 316.9 618.0 318.7 C618.2 320.4 619.7 322.2 619.6 324.0 C619.5 325.8 617.8 327.6 617.3 329.3 C616.8 331.1 616.3 332.9 616.4 334.7 C616.5 336.4 618.1 338.4 618.0 340.0 C617.9 341.6 616.4 342.7 616.0 344.0 C615.6 345.3 615.1 346.7 615.3 348.0 C615.5 349.3 617.2 350.7 617.2 352.0 C617.2 353.3 615.7 354.7 615.2 356.0 C614.8 357.3 614.3 358.7 614.5 360.0 C614.7 361.3 616.4 362.7 616.4 364.0 C616.4 365.3 614.9 366.7 614.5 368.0 C614.0 369.3 613.5 370.7 613.7 372.0 C613.8 373.3 615.5 374.7 615.6 376.0 C615.6 377.3 614.2 378.7 613.7 380.0 C613.3 381.3 612.7 382.7 612.8 384.0 C613.0 385.3 614.7 386.7 614.7 388.0 C614.8 389.3 613.4 390.7 613.0 392.0 C612.5 393.3 611.8 394.7 612.0 396.0 C612.2 397.3 612.3 399.3 613.9 400.0 C615.6 400.7 620.3 400.8 622.0 400.0 C623.7 399.2 623.8 396.9 624.3 395.3 C624.8 393.8 624.0 392.2 624.8 390.7 C625.6 389.1 628.0 387.6 629.2 386.0 C630.3 384.4 631.1 382.9 631.6 381.3 C632.0 379.8 631.2 378.2 632.0 376.7 C632.8 375.1 635.2 373.6 636.3 372.0 C637.5 370.4 638.4 368.9 638.8 367.3 C639.2 365.8 638.2 364.2 638.7 362.7 C639.2 361.1 641.1 359.6 641.9 358.0 C642.7 356.4 643.2 354.9 643.4 353.3 C643.5 351.8 642.3 350.2 642.7 348.7 C643.1 347.1 645.1 345.6 645.8 344.0 C646.6 342.4 647.3 340.9 647.4 339.3 C647.5 337.8 646.3 336.2 646.7 334.7 C647.1 333.1 649.0 331.6 649.8 330.0 C650.6 328.4 651.3 326.6 651.4 324.9 C651.6 323.2 650.3 321.6 650.7 319.9 C651.1 318.2 653.0 316.5 653.8 314.8 C654.6 313.1 655.3 311.4 655.5 309.7 C655.6 308.0 654.3 306.4 654.7 304.7 C655.1 303.0 656.9 301.3 657.7 299.6 C658.5 297.9 659.8 296.2 659.5 294.5 C659.2 292.9 657.1 291.4 656.2 289.9 C655.3 288.4 655.0 287.0 654.1 285.6 C653.2 284.2 652.4 282.8 650.9 281.3 C649.3 279.9 646.3 278.5 645.0 277.1 C643.6 275.6 643.7 274.2 642.8 272.8 C642.0 271.4 641.2 270.0 639.7 268.5 C638.2 267.1 635.1 265.7 633.8 264.3 C632.4 262.8 633.9 260.4 631.6 260.0 C629.3 259.6 622.2 260.8 620.0 262.0Z" fill="url(#gd)" fill-opacity="1" stroke="#a030b4" stroke-width="0.9" stroke-linejoin="round"/>
<path d="M633.0 300.0 C631.7 300.5 631.7 302.0 631.4 303.0 C631.0 304.0 630.9 305.0 631.0 306.0 C631.2 307.0 632.2 308.0 632.1 309.0 C632.0 310.0 630.8 311.0 630.5 312.0 C630.2 313.0 630.0 314.0 630.1 315.0 C630.2 316.0 631.3 317.0 631.2 318.0 C631.1 319.0 629.9 320.0 629.6 321.0 C629.3 322.0 629.1 323.0 629.2 324.0 C629.3 325.0 630.4 326.0 630.3 327.0 C630.2 328.0 629.1 328.9 628.7 330.0 C628.4 331.1 628.0 332.4 628.1 333.6 C628.1 334.8 629.1 336.0 629.0 337.2 C628.9 338.4 627.7 339.6 627.3 340.8 C626.9 342.0 626.5 343.2 626.5 344.4 C626.6 345.6 627.6 346.8 627.5 348.0 C627.4 349.2 626.2 350.4 625.8 351.6 C625.4 352.8 625.0 354.0 625.0 355.2 C625.0 356.4 626.1 357.6 626.0 358.8 C625.9 360.0 624.7 361.2 624.3 362.4 C623.9 363.6 622.8 365.4 623.5 366.0 C624.2 366.6 627.7 366.6 628.4 366.0 C629.1 365.4 627.5 363.6 627.7 362.4 C627.9 361.2 629.2 360.0 629.7 358.8 C630.1 357.6 630.5 356.4 630.5 355.2 C630.6 354.0 629.6 352.8 629.8 351.6 C630.0 350.4 631.3 349.2 631.7 348.0 C632.2 346.8 632.6 345.6 632.7 344.4 C632.7 343.2 631.7 342.0 631.9 340.8 C632.1 339.6 633.3 338.4 633.8 337.2 C634.3 336.0 634.7 334.8 634.8 333.6 C634.8 332.4 633.9 331.1 634.0 330.0 C634.2 328.9 635.2 328.0 635.6 327.0 C636.0 326.0 636.4 325.0 636.3 324.0 C636.2 323.0 635.1 322.0 635.2 321.0 C635.3 320.0 636.4 319.0 636.8 318.0 C637.1 317.0 637.6 316.0 637.5 315.0 C637.5 314.0 636.4 313.0 636.4 312.0 C636.5 311.0 637.5 310.0 637.9 309.0 C638.3 308.0 638.8 307.0 638.7 306.0 C638.7 305.0 637.6 304.0 637.6 303.0 C637.7 302.0 639.9 300.5 639.1 300.0 C638.3 299.5 634.3 299.5 633.0 300.0Z" fill="#fff6fe" fill-opacity="1" stroke="#b848c4" stroke-width="0.9" stroke-linejoin="round"/>
<path d="M579.0 318.0 C578.2 318.5 578.2 320.0 578.0 321.0 C577.9 322.0 578.0 323.0 578.2 324.0 C578.5 325.0 579.6 326.0 579.7 327.0 C579.7 328.0 578.9 329.0 578.7 330.0 C578.6 331.0 578.6 332.0 578.9 333.0 C579.1 334.0 580.2 335.0 580.3 336.0 C580.4 337.0 579.5 338.0 579.4 339.0 C579.3 340.0 579.3 341.0 579.5 342.0 C579.8 343.0 580.8 344.0 581.0 345.0 C581.1 346.0 580.5 347.0 580.4 348.0 C580.4 349.0 580.5 350.0 580.8 351.0 C581.2 352.0 582.4 353.0 582.7 354.0 C582.9 355.0 582.2 356.0 582.1 357.0 C582.1 358.0 582.1 359.0 582.5 360.0 C582.8 361.0 584.1 362.0 584.3 363.0 C584.5 364.0 583.9 365.0 583.8 366.0 C583.8 367.0 583.8 368.0 584.1 369.0 C584.5 370.0 585.1 371.5 586.0 372.0 C586.8 372.5 588.6 372.5 589.1 372.0 C589.6 371.5 589.2 370.0 588.9 369.0 C588.6 368.0 587.5 367.0 587.3 366.0 C587.2 365.0 588.0 364.0 588.1 363.0 C588.2 362.0 588.3 361.0 588.0 360.0 C587.7 359.0 586.5 358.0 586.3 357.0 C586.2 356.0 587.0 355.0 587.1 354.0 C587.2 353.0 587.3 352.0 587.0 351.0 C586.7 350.0 585.5 349.0 585.3 348.0 C585.2 347.0 586.0 346.0 586.1 345.0 C586.2 344.0 586.3 343.0 586.0 342.0 C585.7 341.0 584.5 340.0 584.4 339.0 C584.2 338.0 584.9 337.0 585.0 336.0 C585.1 335.0 585.3 334.0 585.0 333.0 C584.7 332.0 583.5 331.0 583.4 330.0 C583.2 329.0 583.9 328.0 584.0 327.0 C584.1 326.0 584.3 325.0 584.0 324.0 C583.8 323.0 582.5 322.0 582.4 321.0 C582.2 320.0 583.5 318.5 583.0 318.0 C582.4 317.5 579.8 317.5 579.0 318.0Z" fill="#fff6fe" fill-opacity="1" stroke="#c848c8" stroke-width="0.9" stroke-linejoin="round"/>
<path d="M640.0 264.0 C640.4 264.5 644.7 265.3 644.2 265.8 C643.7 266.3 638.3 266.5 637.2 267.0 C636.2 267.6 639.1 268.7 637.8 269.2 C636.5 269.6 631.4 269.1 629.5 269.5 C627.5 269.9 628.2 271.2 626.3 271.4 C624.5 271.7 620.6 270.7 618.2 270.8 C615.8 271.0 614.1 272.3 612.0 272.3 C609.9 272.3 608.2 271.0 605.8 270.8 C603.4 270.7 599.5 271.7 597.7 271.4 C595.8 271.2 596.5 269.9 594.5 269.5 C592.6 269.1 587.5 269.6 586.2 269.2 C584.9 268.7 587.8 267.6 586.8 267.0 C585.7 266.5 580.3 266.3 579.8 265.8 C579.3 265.3 583.6 264.5 584.0 264.0 C584.4 263.5 581.3 263.0 582.1 262.7 C582.9 262.3 587.6 262.2 588.6 261.8 C589.6 261.4 586.8 260.6 588.0 260.3 C589.2 260.0 594.0 260.4 595.8 260.1 C597.6 259.8 597.0 258.8 598.7 258.7 C600.4 258.5 604.0 259.2 606.2 259.1 C608.4 259.0 610.1 258.1 612.0 258.1 C613.9 258.1 615.6 259.0 617.8 259.1 C620.0 259.2 623.6 258.5 625.3 258.7 C627.0 258.8 626.4 259.8 628.2 260.1 C630.0 260.4 634.8 260.0 636.0 260.3 C637.2 260.6 634.4 261.4 635.4 261.8 C636.4 262.2 641.1 262.3 641.9 262.7 C642.7 263.0 639.6 263.5 640.0 264.0Z" fill="#e888dc" stroke="#f8d8f6" stroke-width="1"/>
<path d="M592 264 C598 260 602 270 608 264 C614 270 620 260 626 266 C630 262 634 268 636 264" fill="none" stroke="#fff" stroke-width="1.2" stroke-opacity=".7"/>
<use href="#dome" fill="url(#jb)"/>
<g clip-path="url(#dc)">
<rect x="510" y="135" width="200" height="85" fill="url(#js)"/>
<path d="M594.3 139 C566.0 152 526.0 178 531.0 225.0" fill="none" stroke="#a01ca8" stroke-opacity=".6" stroke-width=".8"/>
<path d="M597.7 139 C575.0 152 543.0 178 547.0 221.8" fill="none" stroke="#a01ca8" stroke-opacity=".6" stroke-width=".8"/>
<path d="M601.0 139 C584.0 152 560.0 178 563.0 219.2" fill="none" stroke="#a01ca8" stroke-opacity=".6" stroke-width=".8"/>
<path d="M604.3 139 C593.0 152 577.0 178 579.0 217.4" fill="none" stroke="#a01ca8" stroke-opacity=".6" stroke-width=".8"/>
<path d="M607.7 139 C602.0 152 594.0 178 595.0 216.4" fill="none" stroke="#a01ca8" stroke-opacity=".6" stroke-width=".8"/>
<path d="M611.0 139 C611.0 152 611.0 178 611.0 216.0" fill="none" stroke="#a01ca8" stroke-opacity=".6" stroke-width=".8"/>
<path d="M614.3 139 C620.0 152 628.0 178 627.0 216.4" fill="none" stroke="#a01ca8" stroke-opacity=".6" stroke-width=".8"/>
<path d="M617.7 139 C629.0 152 645.0 178 643.0 217.4" fill="none" stroke="#a01ca8" stroke-opacity=".6" stroke-width=".8"/>
<path d="M621.0 139 C638.0 152 662.0 178 659.0 219.2" fill="none" stroke="#a01ca8" stroke-opacity=".6" stroke-width=".8"/>
<path d="M624.3 139 C647.0 152 679.0 178 675.0 221.8" fill="none" stroke="#a01ca8" stroke-opacity=".6" stroke-width=".8"/>
<path d="M627.7 139 C656.0 152 696.0 178 691.0 225.0" fill="none" stroke="#a01ca8" stroke-opacity=".6" stroke-width=".8"/>
<g filter="url(#bl1)">
<path d="M592.7 148 C561.5 160 517.5 182 523.0 220.9" fill="none" stroke="#fff" stroke-opacity="0.35" stroke-width="5"/>
<path d="M596.0 148 C570.5 160 534.5 182 539.0 217.3" fill="none" stroke="#fff" stroke-opacity="0.35" stroke-width="5"/>
<path d="M599.3 148 C579.5 160 551.5 182 555.0 214.4" fill="none" stroke="#fff" stroke-opacity="0.35" stroke-width="5"/>
<path d="M602.7 148 C588.5 160 568.5 182 571.0 212.3" fill="none" stroke="#fff" stroke-opacity="0.35" stroke-width="5"/>
<path d="M606.0 148 C597.5 160 585.5 182 587.0 210.8" fill="none" stroke="#fff" stroke-opacity="0.35" stroke-width="5"/>
<path d="M609.3 148 C606.5 160 602.5 182 603.0 210.1" fill="none" stroke="#fff" stroke-opacity="0.35" stroke-width="5"/>
<path d="M612.7 148 C615.5 160 619.5 182 619.0 210.1" fill="none" stroke="#fff" stroke-opacity="0.35" stroke-width="5"/>
<path d="M616.0 148 C624.5 160 636.5 182 635.0 210.8" fill="none" stroke="#fff" stroke-opacity="0.35" stroke-width="5"/>
<path d="M619.3 148 C633.5 160 653.5 182 651.0 212.3" fill="none" stroke="#fff" stroke-opacity="0.15" stroke-width="5"/>
<path d="M622.7 148 C642.5 160 670.5 182 667.0 214.4" fill="none" stroke="#fff" stroke-opacity="0.15" stroke-width="5"/>
<path d="M626.0 148 C651.5 160 687.5 182 683.0 217.3" fill="none" stroke="#fff" stroke-opacity="0.15" stroke-width="5"/>
<path d="M629.3 148 C660.5 160 704.5 182 699.0 220.9" fill="none" stroke="#fff" stroke-opacity="0.15" stroke-width="5"/>
</g>
<path d="M591.8 146 C559.7 160 514.5 182 520.0 221.9" fill="none" stroke="#fff" stroke-opacity=".22" stroke-width=".5"/>
<path d="M592.7 146 C561.5 160 517.5 182 523.0 221.9" fill="none" stroke="#fff" stroke-opacity=".22" stroke-width=".5"/>
<path d="M593.6 146 C563.3 160 520.5 182 526.0 221.9" fill="none" stroke="#fff" stroke-opacity=".22" stroke-width=".5"/>
<path d="M595.1 146 C568.7 160 531.5 182 536.0 218.3" fill="none" stroke="#fff" stroke-opacity=".22" stroke-width=".5"/>
<path d="M596.0 146 C570.5 160 534.5 182 539.0 218.3" fill="none" stroke="#fff" stroke-opacity=".22" stroke-width=".5"/>
<path d="M596.9 146 C572.3 160 537.5 182 542.0 218.3" fill="none" stroke="#fff" stroke-opacity=".22" stroke-width=".5"/>
<path d="M598.4 146 C577.7 160 548.5 182 552.0 215.4" fill="none" stroke="#fff" stroke-opacity=".22" stroke-width=".5"/>
<path d="M599.3 146 C579.5 160 551.5 182 555.0 215.4" fill="none" stroke="#fff" stroke-opacity=".22" stroke-width=".5"/>
<path d="M600.2 146 C581.3 160 554.5 182 558.0 215.4" fill="none" stroke="#fff" stroke-opacity=".22" stroke-width=".5"/>
<path d="M601.8 146 C586.7 160 565.5 182 568.0 213.3" fill="none" stroke="#fff" stroke-opacity=".22" stroke-width=".5"/>
<path d="M602.7 146 C588.5 160 568.5 182 571.0 213.3" fill="none" stroke="#fff" stroke-opacity=".22" stroke-width=".5"/>
<path d="M603.6 146 C590.3 160 571.5 182 574.0 213.3" fill="none" stroke="#fff" stroke-opacity=".22" stroke-width=".5"/>
<path d="M605.1 146 C595.7 160 582.5 182 584.0 211.8" fill="none" stroke="#fff" stroke-opacity=".22" stroke-width=".5"/>
<path d="M606.0 146 C597.5 160 585.5 182 587.0 211.8" fill="none" stroke="#fff" stroke-opacity=".22" stroke-width=".5"/>
<path d="M606.9 146 C599.3 160 588.5 182 590.0 211.8" fill="none" stroke="#fff" stroke-opacity=".22" stroke-width=".5"/>
<path d="M608.4 146 C604.7 160 599.5 182 600.0 211.1" fill="none" stroke="#fff" stroke-opacity=".22" stroke-width=".5"/>
<path d="M609.3 146 C606.5 160 602.5 182 603.0 211.1" fill="none" stroke="#fff" stroke-opacity=".22" stroke-width=".5"/>
<path d="M610.2 146 C608.3 160 605.5 182 606.0 211.1" fill="none" stroke="#fff" stroke-opacity=".22" stroke-width=".5"/>
<path d="M611.8 146 C613.7 160 616.5 182 616.0 211.1" fill="none" stroke="#fff" stroke-opacity=".22" stroke-width=".5"/>
<path d="M612.7 146 C615.5 160 619.5 182 619.0 211.1" fill="none" stroke="#fff" stroke-opacity=".22" stroke-width=".5"/>
<path d="M613.6 146 C617.3 160 622.5 182 622.0 211.1" fill="none" stroke="#fff" stroke-opacity=".22" stroke-width=".5"/>
<path d="M615.1 146 C622.7 160 633.5 182 632.0 211.8" fill="none" stroke="#fff" stroke-opacity=".22" stroke-width=".5"/>
<path d="M616.0 146 C624.5 160 636.5 182 635.0 211.8" fill="none" stroke="#fff" stroke-opacity=".22" stroke-width=".5"/>
<path d="M616.9 146 C626.3 160 639.5 182 638.0 211.8" fill="none" stroke="#fff" stroke-opacity=".22" stroke-width=".5"/>
<path d="M618.4 146 C631.7 160 650.5 182 648.0 213.3" fill="none" stroke="#fff" stroke-opacity=".22" stroke-width=".5"/>
<path d="M619.3 146 C633.5 160 653.5 182 651.0 213.3" fill="none" stroke="#fff" stroke-opacity=".22" stroke-width=".5"/>
<path d="M620.2 146 C635.3 160 656.5 182 654.0 213.3" fill="none" stroke="#fff" stroke-opacity=".22" stroke-width=".5"/>
<path d="M621.8 146 C640.7 160 667.5 182 664.0 215.4" fill="none" stroke="#fff" stroke-opacity=".22" stroke-width=".5"/>
<path d="M622.7 146 C642.5 160 670.5 182 667.0 215.4" fill="none" stroke="#fff" stroke-opacity=".22" stroke-width=".5"/>
<path d="M623.6 146 C644.3 160 673.5 182 670.0 215.4" fill="none" stroke="#fff" stroke-opacity=".22" stroke-width=".5"/>
<path d="M625.1 146 C649.7 160 684.5 182 680.0 218.3" fill="none" stroke="#fff" stroke-opacity=".22" stroke-width=".5"/>
<path d="M626.0 146 C651.5 160 687.5 182 683.0 218.3" fill="none" stroke="#fff" stroke-opacity=".22" stroke-width=".5"/>
<path d="M626.9 146 C653.3 160 690.5 182 686.0 218.3" fill="none" stroke="#fff" stroke-opacity=".22" stroke-width=".5"/>
<path d="M628.4 146 C658.7 160 701.5 182 696.0 221.9" fill="none" stroke="#fff" stroke-opacity=".22" stroke-width=".5"/>
<path d="M629.3 146 C660.5 160 704.5 182 699.0 221.9" fill="none" stroke="#fff" stroke-opacity=".22" stroke-width=".5"/>
<path d="M630.2 146 C662.3 160 707.5 182 702.0 221.9" fill="none" stroke="#fff" stroke-opacity=".22" stroke-width=".5"/>
<ellipse cx="585" cy="192" rx="75" ry="9" fill="#fff" fill-opacity=".28" filter="url(#bl)"/>
<ellipse cx="523.0" cy="221.9" rx="6" ry="3" fill="#f8a8f0" fill-opacity=".45"/>
<ellipse cx="539.0" cy="218.3" rx="6" ry="3" fill="#f8a8f0" fill-opacity=".45"/>
<ellipse cx="555.0" cy="215.4" rx="6" ry="3" fill="#f8a8f0" fill-opacity=".45"/>
<ellipse cx="571.0" cy="213.3" rx="6" ry="3" fill="#f8a8f0" fill-opacity=".45"/>
<ellipse cx="587.0" cy="211.8" rx="6" ry="3" fill="#f8a8f0" fill-opacity=".45"/>
<ellipse cx="603.0" cy="211.1" rx="6" ry="3" fill="#f8a8f0" fill-opacity=".45"/>
<ellipse cx="619.0" cy="211.1" rx="6" ry="3" fill="#f8a8f0" fill-opacity=".45"/>
<ellipse cx="635.0" cy="211.8" rx="6" ry="3" fill="#f8a8f0" fill-opacity=".45"/>
<ellipse cx="651.0" cy="213.3" rx="6" ry="3" fill="#f8a8f0" fill-opacity=".45"/>
<ellipse cx="667.0" cy="215.4" rx="6" ry="3" fill="#f8a8f0" fill-opacity=".45"/>
<ellipse cx="683.0" cy="218.3" rx="6" ry="3" fill="#f8a8f0" fill-opacity=".45"/>
<ellipse cx="699.0" cy="221.9" rx="6" ry="3" fill="#f8a8f0" fill-opacity=".45"/>
</g>
<path d="M515.5 220.9 Q516.0 225.9 523.0 225.9 Q530.0 225.9 530.5 220.9" fill="none" stroke="#fbe4f8" stroke-width="1.1" stroke-opacity=".9"/>
<path d="M531.5 217.3 Q532.0 222.3 539.0 222.3 Q546.0 222.3 546.5 217.3" fill="none" stroke="#fbe4f8" stroke-width="1.1" stroke-opacity=".9"/>
<path d="M547.5 214.4 Q548.0 219.4 555.0 219.4 Q562.0 219.4 562.5 214.4" fill="none" stroke="#fbe4f8" stroke-width="1.1" stroke-opacity=".9"/>
<path d="M563.5 212.3 Q564.0 217.3 571.0 217.3 Q578.0 217.3 578.5 212.3" fill="none" stroke="#fbe4f8" stroke-width="1.1" stroke-opacity=".9"/>
<path d="M579.5 210.8 Q580.0 215.8 587.0 215.8 Q594.0 215.8 594.5 210.8" fill="none" stroke="#fbe4f8" stroke-width="1.1" stroke-opacity=".9"/>
<path d="M595.5 210.1 Q596.0 215.1 603.0 215.1 Q610.0 215.1 610.5 210.1" fill="none" stroke="#fbe4f8" stroke-width="1.1" stroke-opacity=".9"/>
<path d="M611.5 210.1 Q612.0 215.1 619.0 215.1 Q626.0 215.1 626.5 210.1" fill="none" stroke="#fbe4f8" stroke-width="1.1" stroke-opacity=".9"/>
<path d="M627.5 210.8 Q628.0 215.8 635.0 215.8 Q642.0 215.8 642.5 210.8" fill="none" stroke="#fbe4f8" stroke-width="1.1" stroke-opacity=".9"/>
<path d="M643.5 212.3 Q644.0 217.3 651.0 217.3 Q658.0 217.3 658.5 212.3" fill="none" stroke="#fbe4f8" stroke-width="1.1" stroke-opacity=".9"/>
<path d="M659.5 214.4 Q660.0 219.4 667.0 219.4 Q674.0 219.4 674.5 214.4" fill="none" stroke="#fbe4f8" stroke-width="1.1" stroke-opacity=".9"/>
<path d="M675.5 217.3 Q676.0 222.3 683.0 222.3 Q690.0 222.3 690.5 217.3" fill="none" stroke="#fbe4f8" stroke-width="1.1" stroke-opacity=".9"/>
<path d="M691.5 220.9 Q692.0 225.9 699.0 225.9 Q706.0 225.9 706.5 220.9" fill="none" stroke="#fbe4f8" stroke-width="1.1" stroke-opacity=".9"/>
<path d="M515 209 A96 70.5 0 0 1 707 209" fill="none" stroke="#b020b8" stroke-width=".9"/>
</svg><!--/J-->
</div>
<div class="abs" style="left:850px;top:73px;width:1px;height:549px;background:#131313"></div>
<div id="insp" class="abs">
  <div class="abs" style="left:0;top:0;width:128px;height:16px;background:#242424"></div>
  <div class="abs" style="left:20px;top:1.5px;width:16px;height:13.5px;border-radius:2.5px;background:#2d2b34"></div>
  <svg class="abs" style="left:24px;top:4.5px" width="9" height="8" viewBox="0 0 9 8"><rect x=".5" y=".5" width="8" height="7" rx="1" fill="none" stroke="#8a5ce0" stroke-width="1"/><rect x=".5" y=".5" width="8" height="2" fill="#8a5ce0"/><path d="M2 4.5h5M2 6h3" stroke="#8a5ce0" stroke-width=".6"/></svg>
  <svg class="abs" style="left:42.5px;top:3.5px" width="8" height="10" viewBox="0 0 8 10"><path d="M1 .6h6v8.6L4 6.8 1 9.2z" fill="none" stroke="#7e7e7e" stroke-width=".9"/></svg>
  <svg class="abs" style="left:59px;top:3.5px" width="11" height="10" viewBox="0 0 11 10"><path d="M6 .6h4v4L4.6 9.4.8 5.6z" fill="none" stroke="#7e7e7e" stroke-width=".9"/><circle cx="8" cy="2.6" r=".8" fill="#7e7e7e"/></svg>
  <svg class="abs" style="left:77.5px;top:4px" width="10" height="9" viewBox="0 0 10 9"><path d="M.6 2.2h2.2l1-1.4h2.4l1 1.4h2.2v6H.6z" fill="none" stroke="#7e7e7e" stroke-width=".9"/><circle cx="5" cy="5" r="1.7" fill="none" stroke="#7e7e7e" stroke-width=".9"/></svg>
  <svg class="abs" style="left:96px;top:3.5px" width="10" height="10" viewBox="0 0 10 10"><path d="M1 .8h8v6H4.2L2 8.8V6.8H1z" fill="none" stroke="#7e7e7e" stroke-width=".9" stroke-linejoin="round"/></svg>
  <div class="abs" style="left:0;top:16px;width:128px;height:1px;background:#333"></div>
  <svg class="abs" style="left:5px;top:22.5px" width="6" height="4" viewBox="0 0 6 4"><path d="M.8 .8L3 3 5.2 .8" stroke="#8a8a8a" stroke-width=".9" fill="none"/></svg>
  <div class="abs" style="left:14px;top:20px;font-size:6.5px;font-weight:bold;color:#9a9a9a;line-height:9px;white-space:nowrap">Synopsis</div>
  <svg class="abs" style="left:115.5px;top:21px" width="9" height="7" viewBox="0 0 9 7"><rect width="9" height="7" rx=".8" fill="#a8a8a8"/><path d="M1 6l2.5-2.5 1.5 1.5 1.5-2L8 6z" fill="#2a2a2a"/><circle cx="6.5" cy="2" r=".8" fill="#2a2a2a"/></svg>
  <div class="abs" style="left:0;top:31px;width:128px;height:1px;background:#353535"></div>
  <div class="abs" style="left:7px;top:34.5px;font-size:7px;font-weight:bold;color:#f0f0f0;line-height:10px;white-space:nowrap">Jellyfish Regeneration</div>
  <div class="abs" style="left:6px;top:46.5px;width:116px;height:1px;background:#333"></div>
  <div class="it" style="left:7px;top:54px">Research about these ancient<br>animals is becoming more vital to<br>our understanding of biological<br>recovery and regrowth.</div>
  <div class="abs" style="left:0;top:116.5px;width:128px;height:1px;background:#383838"></div>
  <svg class="abs" style="left:5px;top:123.5px" width="6" height="4" viewBox="0 0 6 4"><path d="M.8 .8L3 3 5.2 .8" stroke="#8a8a8a" stroke-width=".9" fill="none"/></svg>
  <div class="abs" style="left:14px;top:121px;font-size:6.5px;font-weight:bold;color:#9a9a9a;line-height:9px;white-space:nowrap">Notes</div>
  <div class="abs" style="left:0;top:132px;width:128px;height:1px;background:#353535"></div>
</div>
</body></html>
